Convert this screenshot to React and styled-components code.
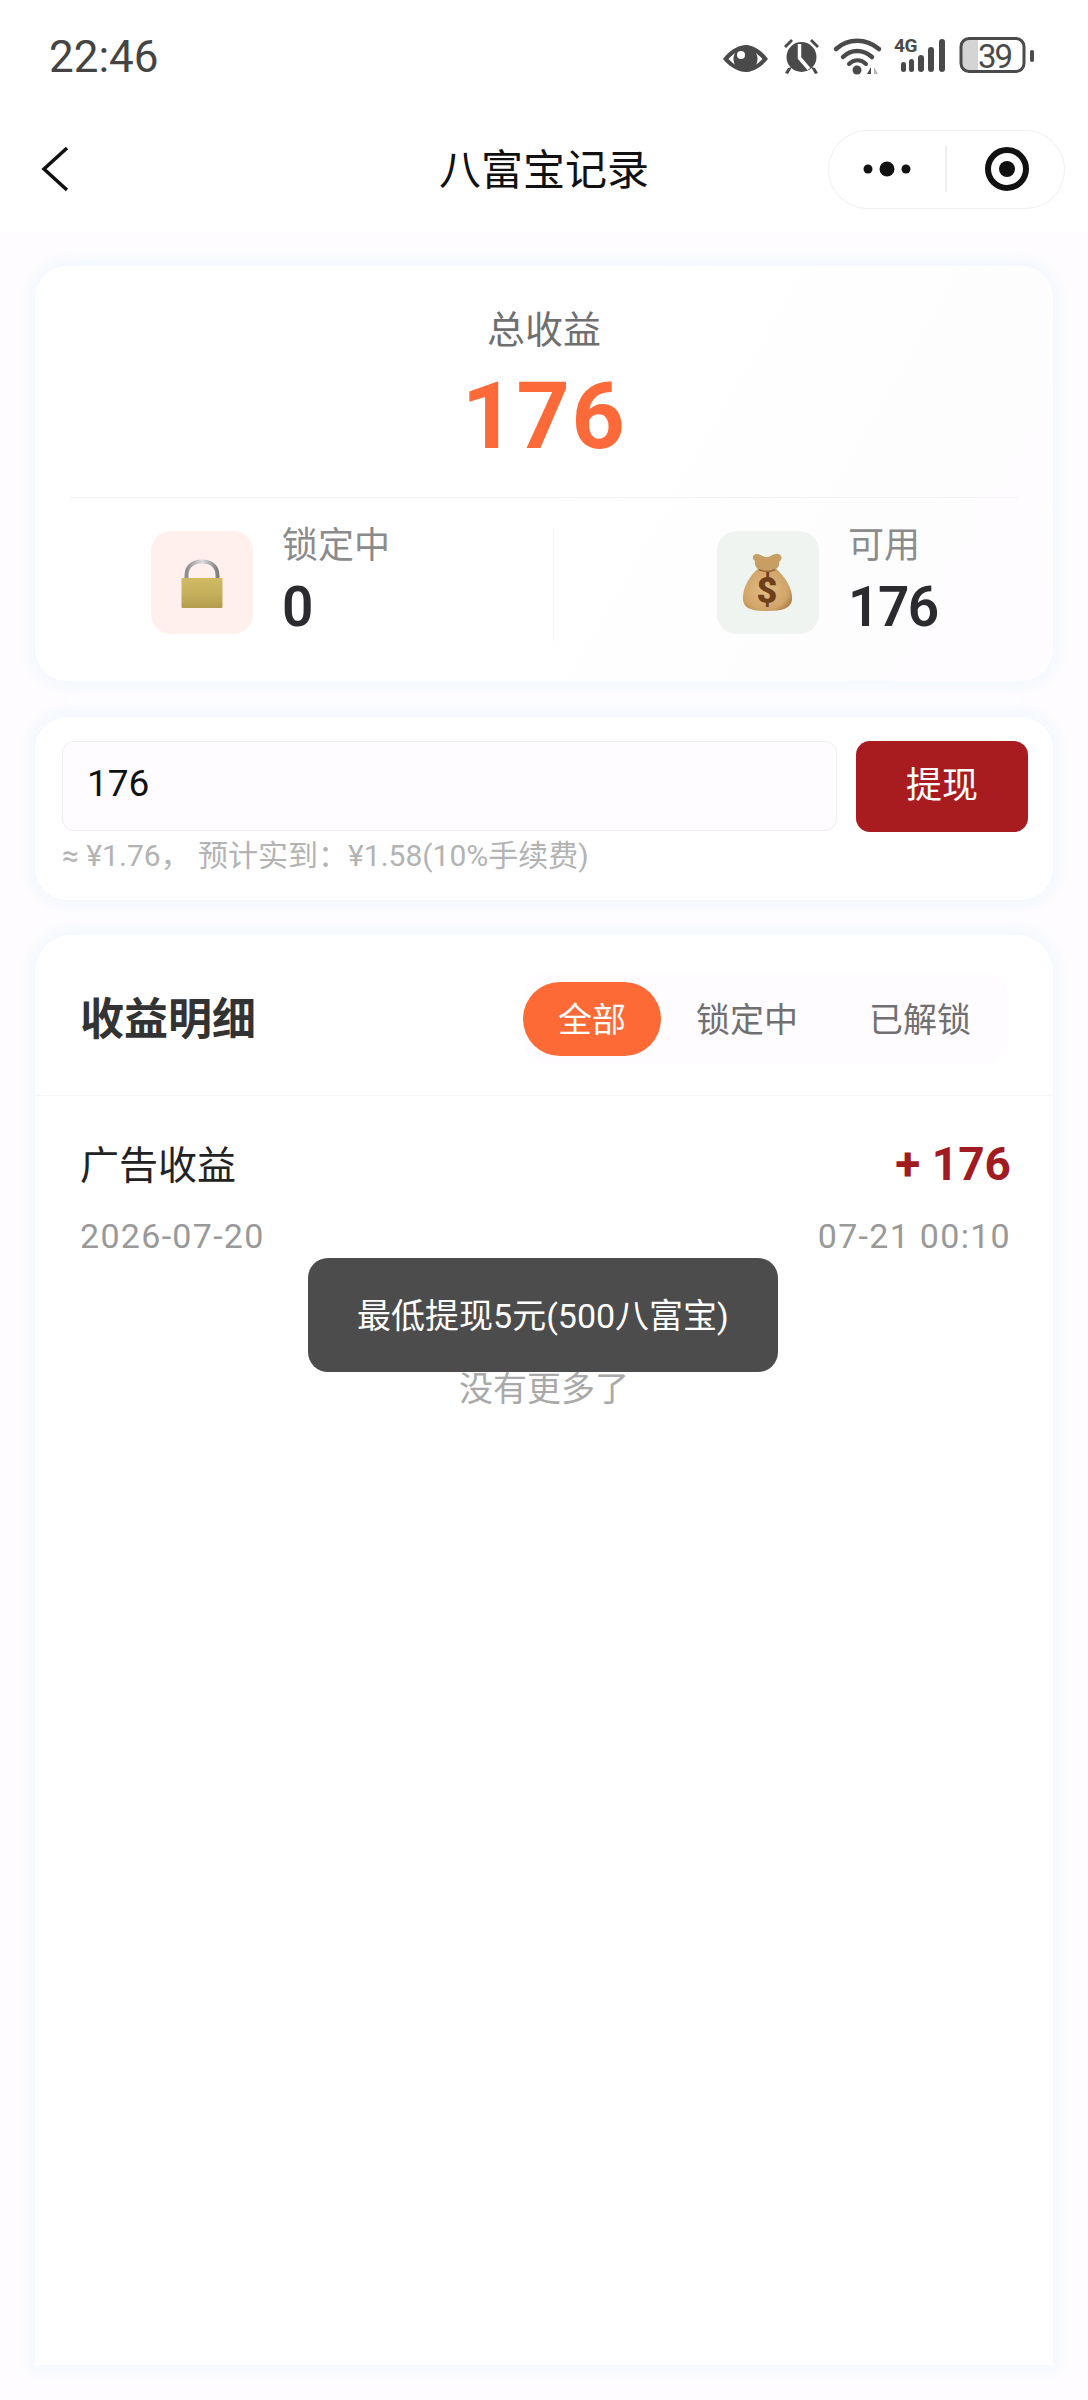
import React from "react";
import styled, { createGlobalStyle } from "styled-components";

const Global = createGlobalStyle`
  html, body { margin: 0; padding: 0; background: #fff; }
  * { box-sizing: border-box; }
  body { font-family: Roboto, "Noto Sans CJK SC", sans-serif; }
`;

const Page = styled.div`
  position: relative;
  width: 1088px;
  height: 2400px;
  display: flex;
  flex-direction: column;
  background: #fefcfe;
  overflow: hidden;
`;

const Top = styled.header`
  height: 232px;
  flex: none;
  background: #fff;
  display: flex;
  flex-direction: column;
`;

const StatusBar = styled.div`
  height: 115px;
  padding: 34px 54px 0 49px;
  display: flex;
  justify-content: space-between;
  align-items: flex-start;
`;

const Time = styled.span`
  font: 400 44px/46px Roboto, sans-serif;
  color: #444;
`;

const NavBar = styled.nav`
  position: relative;
  height: 117px;
  padding: 15px 23px 0 40px;
  display: flex;
  justify-content: space-between;
  align-items: flex-start;
`;

const Title = styled.h1`
  position: absolute;
  left: 0;
  right: 0;
  top: 31px;
  margin: 0;
  text-align: center;
  font: 400 42px/42px "Noto Sans CJK SC", sans-serif;
  color: #111;
`;

const Capsule = styled.div`
  width: 237px;
  height: 79px;
  border: 1.5px solid #efefef;
  border-radius: 40px;
  background: #fff;
`;

const Main = styled.main`
  flex: 1;
  min-height: 0;
  padding: 34px 35px 35px;
  display: flex;
  flex-direction: column;
  gap: 36px;
`;

const Card = styled.section`
  background: #fff;
  border-radius: 32px;
  box-shadow: 0 0 14px 6px rgba(240, 247, 255, 0.85);
`;

const SummaryCard = styled(Card)`
  height: 415px;
  padding: 39px 35px 0;
  background: linear-gradient(120deg, #ffffff 50%, #fefcfe 100%);
`;

const SummaryLabel = styled.div`
  text-align: center;
  font: 400 38px/44px "Noto Sans CJK SC", sans-serif;
  color: #6f6f6f;
`;

const SummaryValue = styled.div`
  margin-top: 18px;
  text-align: center;
  font: 700 93px/100px Roboto, sans-serif;
  letter-spacing: 1.5px;
  color: #fb6a38;
`;

const Rule = styled.div`
  margin-top: 30px;
  height: 1px;
  background: #f4f2f4;
`;

const StatRow = styled.div`
  margin-top: 30px;
  display: grid;
  grid-template-columns: 483px 1fr;
  height: 113px;
`;

const Stat = styled.div`
  padding-left: ${p => p.$inset}px;
  display: flex;
  gap: 29px;
  align-items: flex-start;
  border-left: ${p => (p.$divided ? "1px solid #f5f3f5" : "none")};
`;

const StatIcon = styled.div`
  width: 102px;
  height: 103px;
  margin-top: 3px;
  flex: none;
  border-radius: 20px;
  background: ${p => p.$bg};
  display: flex;
  align-items: center;
  justify-content: center;
`;

const StatText = styled.div`
  display: flex;
  flex-direction: column;
  margin-top: -6px;
`;

const StatLabel = styled.span`
  font: 400 36px/40px "Noto Sans CJK SC", sans-serif;
  color: #8b8b8b;
`;

const StatValue = styled.span`
  margin-top: 15px;
  font: 600 55px/60px Roboto, sans-serif;
  letter-spacing: -1.5px;
  color: #2b2b2f;
`;

const WithdrawCard = styled(Card)`
  height: 183px;
  padding: 24px 25px 0 27px;
`;

const WithdrawRow = styled.div`
  display: flex;
  gap: 19px;
`;

const AmountInput = styled.div`
  flex: 1;
  height: 90px;
  padding-left: 24px;
  border: 1.5px solid #f0eef0;
  border-radius: 12px;
  background: #fefcfe;
  font: 400 37px/84px Roboto, sans-serif;
  color: #111;
`;

const WithdrawButton = styled.button`
  width: 172px;
  height: 91px;
  padding: 0 0 10px;
  border: 0;
  border-radius: 14px;
  background: #a81c20;
  color: #fff;
  font: 400 36px/1 "Noto Sans CJK SC", sans-serif;
`;

const Hint = styled.div`
  margin-top: 4px;
  font: 400 30px/40px Roboto, "Noto Sans CJK SC", sans-serif;
  color: #b3b3b3;
`;

const DetailCard = styled(Card)`
  flex: 1;
  min-height: 0;
  margin-top: -1px;
  border-radius: 36px 36px 0 0;
`;

const DetailHead = styled.div`
  height: 161px;
  padding: 40px 44px 0 45px;
  display: flex;
  justify-content: space-between;
  align-items: flex-start;
  border-bottom: 1.5px solid #f8f7f8;
`;

const DetailTitle = styled.h2`
  margin: 0;
  padding-top: 15px;
  font: 700 44px/52px "Noto Sans CJK SC", sans-serif;
  color: #333;
`;

const Tabs = styled.div`
  display: flex;
  align-items: center;
  height: 90px;
  margin-top: -1px;
  padding-right: 2px;
  border-radius: 24px;
  background: #fefcfe;
`;

const Tab = styled.div`
  height: 74px;
  width: ${p => p.$w}px;
  border-radius: 37px;
  background: ${p => (p.$active ? "#fd6a35" : "transparent")};
  color: ${p => (p.$active ? "#fff" : "#707070")};
  font: 400 34px/72px "Noto Sans CJK SC", sans-serif;
  text-align: center;
`;

const Record = styled.div`
  padding: 43px 42px 0 45px;
`;

const RecordLine = styled.div`
  display: flex;
  justify-content: space-between;
  align-items: center;
  height: ${p => p.$h}px;
  margin-top: ${p => p.$gap || 0}px;
`;

const RecordName = styled.span`
  margin-top: -5px;
  font: 400 39px/50px "Noto Sans CJK SC", sans-serif;
  color: #222;
`;

const RecordAmount = styled.span`
  font: 700 46px/50px Roboto, sans-serif;
  color: #a01c22;
`;

const RecordDate = styled.span`
  font: 400 34px/40px Roboto, sans-serif;
  color: #999;
  letter-spacing: 1.3px;
`;

const NoMore = styled.div`
  margin-top: 109px;
  text-align: center;
  font: 400 34px/44px "Noto Sans CJK SC", sans-serif;
  color: #a9a9a9;
`;

const Toast = styled.div`
  position: absolute;
  left: 308px;
  top: 1258px;
  width: 470px;
  height: 114px;
  border-radius: 20px;
  background: #4c4c4c;
  color: #fff;
  font: 400 34px/116px Roboto, "Noto Sans CJK SC", sans-serif;
  text-align: center;
`;

const StatusIcons = () => (
  <svg width="320" height="44" viewBox="0 0 320 44">
    <g fill="#4a4a4a">
      <path d="M9 25 C17 14 27 11 31.500 11 C37 11 46 14 54 25 C46 35 37 38 31.500 38 C27 38 17 35 9 25 Z M14.500 25 C20 31 26 34 31.500 34 C37 34 43 31 48.500 25 C43 19 37 15.500 31.500 15.500 C26 15.500 20 19 14.500 25 Z" fillRule="evenodd" />
      <circle cx="31.500" cy="25" r="12" />
      <circle cx="27" cy="21" r="4" fill="#fff" />
      <circle cx="87.500" cy="23" r="15" />
      <path d="M70 12 L77 5 L79 7 L72 14 Z M105 12 L98 5 L96 7 L103 14 Z M74 34 L78 33 L74 40 L71 39 Z M101 34 L97 33 L101 40 L104 39 Z" />
      <path d="M85.500 10 L85.500 24 L95 35" fill="none" stroke="#fff" strokeWidth="3.500" />
      <path d="M122 15 C134 4 152 4 165 15" fill="none" stroke="#4a4a4a" strokeWidth="4.500" strokeLinecap="round" />
      <path d="M129 23 C137 15 149 15 158 23" fill="none" stroke="#4a4a4a" strokeWidth="4.500" strokeLinecap="round" />
      <path d="M135 30 C140 25 147 25 152 30" fill="none" stroke="#4a4a4a" strokeWidth="4" strokeLinecap="round" />
      <circle cx="143" cy="36" r="4.500" />
      <path d="M153 40 L157 33 L157 40 Z" />
      <path d="M160 33 L164 40 L160 40 Z" fill="#b5b5b5" />
      <text x="180" y="18" fontFamily="Roboto, sans-serif" fontSize="19" fontWeight="700" letterSpacing="-0.5">4G</text>
      <rect x="187" y="28" width="5" height="10" rx="2.500" />
      <rect x="195" y="25" width="5" height="13" rx="2.500" />
      <rect x="204" y="21" width="6" height="17" rx="3" />
      <rect x="214" y="13" width="6" height="25" rx="3" />
      <rect x="225" y="5" width="6" height="33" rx="3" />
      <path d="M250 6 L264 6 L264 37 L250 37 Q248 37 248 35 L248 8 Q248 6 250 6 Z" fill="#d4d4d4" />
      <rect x="247" y="4.500" width="63" height="33" rx="8" fill="none" stroke="#4a4a4a" strokeWidth="3" />
      <text x="264" y="34" fontFamily="Roboto, sans-serif" fontSize="33" fontWeight="400" letterSpacing="-2">39</text>
      <rect x="316" y="16" width="4" height="12" rx="2" />
    </g>
  </svg>
);

const BackIcon = () => (
  <svg width="30" height="46" viewBox="0 0 30 46" style={{ marginTop: 16 }}>
    <path d="M27 2 L4 23 L27 44" fill="none" stroke="#111" strokeWidth="3.500" />
  </svg>
);

const CapsuleIcons = () => (
  <svg width="234" height="76" viewBox="0 0 234 76">
    <circle cx="39" cy="38" r="4.500" fill="#111" />
    <circle cx="58" cy="38" r="7.500" fill="#111" />
    <circle cx="77" cy="38" r="4.500" fill="#111" />
    <line x1="117" y1="15" x2="117" y2="61" stroke="#e8e8e8" strokeWidth="1.500" />
    <circle cx="178" cy="38" r="19" fill="none" stroke="#111" strokeWidth="6" />
    <circle cx="178" cy="38" r="8" fill="#111" />
  </svg>
);

const LockIcon = () => (
  <svg width="44" height="50" viewBox="0 0 44 50" style={{ marginTop: 2 }}>
    <defs>
      <linearGradient id="lockBody" x1="0" y1="0" x2="0" y2="1">
        <stop offset="0" stopColor="#d0ba62" />
        <stop offset="0.5" stopColor="#c6b05c" />
        <stop offset="1" stopColor="#b49c4e" />
      </linearGradient>
      <linearGradient id="lockBar" x1="0" y1="0" x2="1" y2="0">
        <stop offset="0" stopColor="#8c8c8c" />
        <stop offset="0.5" stopColor="#dcdcdc" />
        <stop offset="1" stopColor="#7e7e7e" />
      </linearGradient>
    </defs>
    <path d="M6.500 20 V17 C6.500 7 13 2.500 22 2.500 C31 2.500 37.500 7 37.500 17 V20" fill="none" stroke="url(#lockBar)" strokeWidth="4" />
    <rect x="1.500" y="19" width="41" height="30" rx="1" fill="url(#lockBody)" />
  </svg>
);

const BagIcon = () => (
  <svg width="54" height="60" viewBox="0 0 54 60" style={{ marginTop: -2 }}>
    <defs>
      <radialGradient id="bag" cx="0.45" cy="0.5" r="0.65">
        <stop offset="0" stopColor="#e2bd85" />
        <stop offset="0.72" stopColor="#d1a468" />
        <stop offset="1" stopColor="#a4763c" />
      </radialGradient>
    </defs>
    <path d="M18 16 C8 24 1 37 2 48 C3 56 10 59 26 59 C42 59 50 56 51 48 C52 37 44 24 34 16 Z" fill="url(#bag)" />
    <path d="M14 9 C10 6 12 2 16 2 C19 2 22 5 26 5 C30 5 33 1 37 2 C41 3 42 7 38 10 C39 13 37 16 34 18 C28 20 23 20 18 18 C15 16 13 12 14 9 Z" fill="#c99e62" />
    <path d="M18 17.500 C23 20 29 20 34 17.500" fill="none" stroke="#94682f" strokeWidth="1.500" />
    <text x="26" y="51" textAnchor="middle" fontFamily="Roboto, sans-serif" fontSize="36" fontWeight="900" fill="#6f3f1c">$</text>
  </svg>
);

export default function App() {
  return (
    <Page>
      <Global />
      <Top>
        <StatusBar>
          <Time>22:46</Time>
          <StatusIcons />
        </StatusBar>
        <NavBar>
          <BackIcon />
          <Title>八富宝记录</Title>
          <Capsule>
            <CapsuleIcons />
          </Capsule>
        </NavBar>
      </Top>
      <Main>
        <SummaryCard>
          <SummaryLabel>总收益</SummaryLabel>
          <SummaryValue>176</SummaryValue>
          <Rule />
          <StatRow>
            <Stat $inset={81}>
              <StatIcon $bg="#fff0ee">
                <LockIcon />
              </StatIcon>
              <StatText>
                <StatLabel>锁定中</StatLabel>
                <StatValue>0</StatValue>
              </StatText>
            </Stat>
            <Stat $inset={163} $divided>
              <StatIcon $bg="#eff4f1">
                <BagIcon />
              </StatIcon>
              <StatText>
                <StatLabel>可用</StatLabel>
                <StatValue>176</StatValue>
              </StatText>
            </Stat>
          </StatRow>
        </SummaryCard>
        <WithdrawCard>
          <WithdrawRow>
            <AmountInput>176</AmountInput>
            <WithdrawButton>提现</WithdrawButton>
          </WithdrawRow>
          <Hint>≈ ¥1.76， 预计实到：¥1.58(10%手续费)</Hint>
        </WithdrawCard>
        <DetailCard>
          <DetailHead>
            <DetailTitle>收益明细</DetailTitle>
            <Tabs>
              <Tab $active $w={138}>全部</Tab>
              <Tab $w={172}>锁定中</Tab>
              <Tab $w={174}>已解锁</Tab>
            </Tabs>
          </DetailHead>
          <Record>
            <RecordLine $h={50}>
              <RecordName>广告收益</RecordName>
              <RecordAmount>+ 176</RecordAmount>
            </RecordLine>
            <RecordLine $h={40} $gap={27}>
              <RecordDate>2026-07-20</RecordDate>
              <RecordDate>07-21 00:10</RecordDate>
            </RecordLine>
          </Record>
          <NoMore>没有更多了</NoMore>
        </DetailCard>
      </Main>
      <Toast>最低提现5元(500八富宝)</Toast>
    </Page>
  );
}
